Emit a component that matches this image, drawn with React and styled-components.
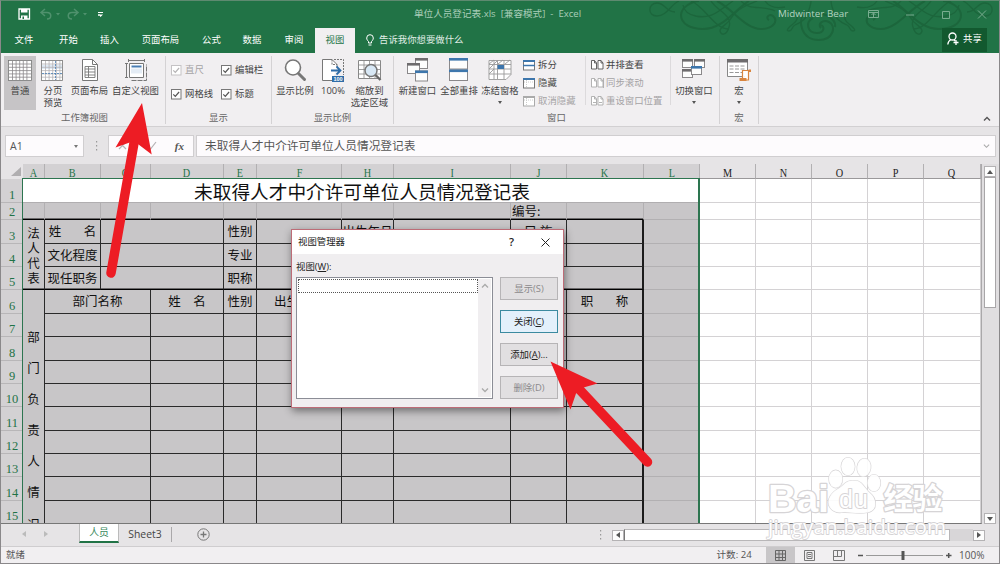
import React from "react";
import styled, { createGlobalStyle, css } from "styled-components";

const UI = `"Open Sans", "Noto Sans CJK SC", sans-serif`;
const CJK = `"Noto Sans CJK SC", sans-serif`;
const GREEN = "#217346";

const Global = createGlobalStyle`
  * { box-sizing: border-box; }
  body { margin: 0; background: #fff; overflow: hidden; }
  svg { display: block; flex: none; }
`;

const Window = styled.div`
  position: relative;
  width: 1000px;
  height: 564px;
  display: flex;
  flex-direction: column;
  border: 1px solid #8a888a;
  border-top-color: #5e8a70;
  background: #e6e4e6;
  font: 9.4px/12px ${UI};
  color: #444;
  overflow: hidden;
  white-space: pre;
`;

/* ---------- title bar and ribbon tabs ---------- */
const Header = styled.header`
  position: relative;
  height: 52px;
  flex: none;
  background: ${GREEN};
  color: #fff;
`;
const Swirls = styled.svg`
  position: absolute;
  right: 0;
  top: 0;
`;
const TitleBar = styled.div`
  position: relative;
  display: flex;
  align-items: center;
  height: 27px;
  padding: 0 6px 2px 17px;
`;
const QuickAccess = styled.div`
  display: flex;
  align-items: center;
  width: 396px;
`;
const DocTitle = styled.div`
  width: 364px;
  font-size: 9.6px;
  color: #a9cdb8;
`;
const Account = styled.div`
  width: 85px;
  font-size: 9.8px;
  color: #b4d3c0;
`;
const WinButtons = styled.div`
  display: flex;
  align-items: center;
`;
const TabRow = styled.div`
  position: relative;
  display: flex;
  height: 25px;
`;
const Tab = styled.div`
  width: ${(p) => p.$w}px;
  display: flex;
  align-items: center;
  justify-content: center;
  padding-bottom: 2px;
  ${(p) => p.$active && css`background: #f1eff1; color: ${GREEN};`}
`;
const TellMe = styled.div`
  display: flex;
  align-items: center;
  gap: 5px;
  padding: 0 0 1px 11px;
  flex: 1;
  color: #e0eee6;
`;
const Share = styled.div`
  display: flex;
  align-items: center;
  gap: 4px;
  width: 45px;
  height: 24px;
  margin-right: 12px;
  padding: 0 0 2px 5px;
  background: #12592f;
`;

/* ---------- ribbon ---------- */
const Ribbon = styled.div`
  display: flex;
  height: 74px;
  flex: none;
  padding: 3px 0 2px 3px;
  background: #f1eff1;
  border-bottom: 1px solid #d2d0d2;
`;
const Group = styled.div`
  width: ${(p) => p.$w}px;
  display: flex;
  flex-direction: column;
  border-right: 1px solid #d4d2d4;
`;
const GroupBody = styled.div`
  display: flex;
  height: 54px;
`;
const GroupLabel = styled.div`
  display: flex;
  justify-content: center;
  padding-top: 2px;
  color: #666;
`;
const BigButton = styled.div`
  width: ${(p) => p.$w}px;
  display: flex;
  flex-direction: column;
  align-items: center;
  text-align: center;
  line-height: 11.5px;
  padding-top: 2px;
  background: ${(p) => (p.$on ? "#c6c4c6" : "transparent")};
  svg { margin-bottom: 3px; }
`;
const Caret = styled.i`
  margin: ${(p) => p.$m || "4px 0 0"};
  border: 2.5px solid transparent;
  border-top: 3px solid ${(p) => p.$c || "#555"};
  border-bottom: 0;
`;
const Checks = styled.div`
  display: grid;
  grid-template-columns: 50px 50px;
  grid-template-rows: 24px 24px;
  align-items: center;
  padding: 2px 0 0 5px;
`;
const Check = styled.div`
  display: flex;
  align-items: center;
  gap: 3px;
  color: ${(p) => (p.$off ? "#a5a3a5" : "#444")};
`;
const SmallCol = styled.div`
  width: ${(p) => p.$w}px;
  display: flex;
  flex-direction: column;
  height: 49px;
  padding-left: ${(p) => p.$pl}px;
  border-right: 1px solid #dcdadc;
`;
const SmallButton = styled.div`
  display: flex;
  align-items: center;
  gap: 2px;
  height: 18px;
  flex: none;
  color: ${(p) => (p.$off ? "#a5a3a5" : "#444")};
`;
const Collapse = styled.div`
  margin-left: auto;
  align-self: flex-end;
  padding: 0 8px 2px 0;
`;

/* ---------- formula bar ---------- */
const FormulaBar = styled.div`
  display: flex;
  align-items: center;
  height: 37px;
  flex: none;
  padding: 1px 3px 0 4px;
`;
const Field = styled.div`
  height: 22px;
  width: ${(p) => p.$w || "auto"};
  flex: ${(p) => (p.$w ? "none" : 1)};
  margin-right: ${(p) => p.$mr || 0}px;
  display: flex;
  align-items: center;
  justify-content: space-between;
  padding: 0 5px 0 4px;
  background: #fdfbfd;
  border: 1px solid #d0ced0;
  color: #555;
  font-size: 10.5px;
`;
const Formula = styled.span`
  font: 11.7px/14px ${CJK};
  padding: 0 0 2px 4px;
`;
const Fx = styled.span`
  font: italic bold 11px "Liberation Serif", serif;
  padding-right: 4px;
`;
const Dots = styled.div`
  width: ${(p) => p.$w}px;
  display: flex;
  justify-content: center;
`;

/* ---------- worksheet ---------- */
const Middle = styled.div`
  display: flex;
  height: 360px;
  flex: none;
`;
const Sheet = styled.div`
  display: grid;
  width: 982px;
  height: 360px;
  overflow: hidden;
  grid-template-columns: 22px 22px 56px 50px 73px 33px 85px 52px 117px 56px 77px 56px 56px 56px 56px 56px 57px 2px;
  grid-template-rows: 15px 24px 17px 24px 23px 23px 24px 23px 24px 23px 23px 24px 23px 23px 24px 23px;
  border-bottom: 1px solid #777;
  border-right: 1px solid #aaa8aa;
`;
const at = css`
  grid-row: ${(p) => p.$r} / span ${(p) => p.$rs || 1};
  grid-column: ${(p) => p.$c} / span ${(p) => p.$cs || 1};
`;
const ColHead = styled.div`
  ${at}
  display: flex;
  justify-content: center;
  font: 12.5px/14px "Liberation Serif", serif;
  padding-top: 2px;
  height: 15px;
  color: ${(p) => (p.$sel ? "#1f7347" : "#222")};
  background: ${(p) => (p.$sel ? "#d3d1d3" : "#e6e4e6")};
  border-right: 1px solid #b2b0b2;
  border-bottom: 1px solid #9a989a;
  span { transform: scaleX(0.82); }
`;
const RowHead = styled.div`
  ${at}
  display: flex;
  justify-content: center;
  align-items: flex-end;
  font: 12.5px/13px "Liberation Serif", serif;
  color: #1f7347;
  background: #d3d1d3;
  border-bottom: 1px solid #b8b6b8;
`;
const Corner = styled.div`
  ${at}
  display: flex;
  justify-content: flex-end;
  align-items: flex-end;
  padding: 0 2px 3px 0;
`;
const Cell = styled.div`
  ${at}
  display: flex;
  align-items: center;
  justify-content: ${(p) => p.$align || "center"};
  font: 12.5px/16px ${CJK};
  color: #111;
  padding: 0 0 1px ${(p) => (p.$align ? 1 : 0)}px;
  background: ${(p) => p.$bg || "#c8c6c8"};
  border-style: solid;
  border-color: ${(p) => p.$line || "#2a2a2a"};
  border-width: 0 ${(p) => (p.$noRight ? 0 : 1)}px 1px 0;
  ${(p) => p.$thickBottom && css`border-bottom: 1px solid #000; box-shadow: inset 0 -1px #6c6a6c;`}
  ${(p) => p.$thickRight && css`border-right: 2px solid #1b1b1b;`}
`;
const SheetTitle = styled(Cell)`
  font-size: 18.67px;
  line-height: 20px;
  padding: 1px 0 0 2px;
  background: #fff;
  border-color: #b0aeb0;
`;
const VerticalCell = styled(Cell)`
  flex-direction: column;
  justify-content: flex-start;
  overflow: hidden;
  padding-top: ${(p) => p.$pt}px;
  span { line-height: ${(p) => p.$lh}px; flex: none; }
`;
const Selection = styled.div`
  grid-row: 2 / -1;
  grid-column: 2 / span 11;
  margin: -1px 0 0 -1px;
  border: 2px solid #2d7550;
  border-bottom: 0;
  border-left-width: 1px;
  border-top-width: 1px;
  z-index: 1;
`;
const VScroll = styled.div`
  flex: 1;
  display: flex;
  flex-direction: column;
  padding: 2px 3px 0 2px;
  background: #e0dee0;
`;
const ScrollBtn = styled.div`
  width: 12px;
  height: 11px;
  flex: none;
  display: flex;
  align-items: center;
  justify-content: center;
  background: #fdfdfd;
  border: 1px solid #b4b2b4;
`;
const VThumb = styled.div`
  width: 12px;
  height: 131px;
  margin-bottom: auto;
  background: #fff;
  border: 1px solid #a8a6a8;
`;
const Tri = styled.i`
  border: 3px solid transparent;
  ${(p) => p.$d === "up" && `border-bottom: 4px solid ${p.$c || "#555"}; border-top: 0;`}
  ${(p) => p.$d === "down" && `border-top: 4px solid ${p.$c || "#555"}; border-bottom: 0;`}
  ${(p) => p.$d === "left" && `border-right: 4px solid ${p.$c || "#555"}; border-left: 0;`}
  ${(p) => p.$d === "right" && `border-left: 4px solid ${p.$c || "#555"}; border-right: 0;`}
`;

/* ---------- sheet tabs and status ---------- */
const TabsBar = styled.div`
  display: flex;
  height: 22px;
  flex: none;
  padding-left: 20px;
`;
const Navs = styled.div`
  display: flex;
  align-items: flex-start;
  gap: 18px;
  width: 58px;
  padding: 7px 0 0 1px;
`;
const SheetTab = styled.div`
  width: ${(p) => p.$w}px;
  height: 19px;
  display: flex;
  align-items: center;
  justify-content: center;
  font-size: ${(p) => (p.$active ? 9.8 : 10.4)}px;
  ${(p) => p.$active && css`
    background: #fff;
    color: #3a8a5e;
    border: 1px solid #bbb;
    border-top: 0;
    border-bottom: 2px solid ${GREEN};
  `}
`;
const TabSep = styled.i`
  width: 1px;
  height: 15px;
  margin: 3px 25px 0 0;
  background: #aaa8aa;
`;
const HScroll = styled.div`
  display: flex;
  align-items: center;
  margin-left: auto;
  padding-right: 14px;
`;
const HThumb = styled.div`
  width: 326px;
  height: 12px;
  background: #fff;
  border: 1px solid #b8b6b8;
  border-left-color: #777;
`;
const HTrack = styled.div`
  width: 23px;
  height: 12px;
  background: #d8d6d8;
`;
const Status = styled.footer`
  display: flex;
  align-items: center;
  flex: 1;
  padding: 0 14px 1px 5px;
  background: #f1eff1;
  border-top: 1px solid #cfcdcf;
  color: #555;
`;
const Count = styled.div`
  margin-left: auto;
  width: 49px;
  font-size: 9.6px;
`;
const ViewBtn = styled.div`
  width: 29.5px;
  height: 16px;
  display: flex;
  align-items: center;
  justify-content: center;
  background: ${(p) => (p.$on ? "#c8c6c8" : "transparent")};
`;
const Percent = styled.div`
  width: 26px;
  margin-left: 7px;
  font-size: 10px;
`;

/* ---------- dialog ---------- */
const Dialog = styled.div`
  position: absolute;
  left: 290px;
  top: 228px;
  width: 273px;
  height: 179px;
  display: flex;
  flex-direction: column;
  background: #f0eef0;
  border: 1px solid #bd6c77;
  box-shadow: 1px 3px 8px rgba(0, 0, 0, 0.45);
  color: #222;
  z-index: 3;
`;
const DialogTitle = styled.div`
  display: flex;
  align-items: center;
  height: 24px;
  flex: none;
  padding: 0 13px 0 6px;
  background: #fff;
`;
const Help = styled.b`
  margin-left: auto;
  padding-right: 27px;
  font-size: 11px;
  font-weight: 600;
`;
const DialogBody = styled.div`
  display: flex;
  gap: 7px;
  padding: 7px 4px 0;
`;
const ListCol = styled.div`
  display: flex;
  flex-direction: column;
  gap: 4px;
`;
const List = styled.div`
  width: 197px;
  height: 122px;
  display: flex;
  background: #fff;
  border: 1px solid #8b8d96;
  padding: 1px;
`;
const ListItem = styled.div`
  flex: 1;
  height: 14px;
  border: 1px dotted #555;
`;
const ListScroll = styled.div`
  width: 13px;
  display: flex;
  flex-direction: column;
  justify-content: space-between;
  align-items: center;
  padding: 4px 0;
  background: #f0eef0;
`;
const DialogButtons = styled.div`
  display: flex;
  flex-direction: column;
  gap: 10px;
  padding-top: 16px;
`;
const DButton = styled.div`
  width: 58px;
  height: 23px;
  display: flex;
  align-items: center;
  justify-content: center;
  color: ${(p) => (p.$off ? "#8b898b" : "#222")};
  background: ${(p) => (p.$hot ? "#e3f0fb" : "#e1dfe1")};
  border: 1px solid ${(p) => (p.$hot ? "#3b8aa0" : "#b6b4b6")};
`;

const Overlay = styled.svg`
  position: absolute;
  left: -1px;
  top: -1px;
  z-index: 4;
  pointer-events: none;
`;

/* ---------- icons ---------- */
const lines = (n, f) => Array.from({ length: n }, (_, i) => f(i));

const SwirlHalf = () => (
  <g>
    <path d="M40 0c-8 3-12 15-22 15-10 0-9-13 0-13 8 0 9 9 18 9" />
    <path d="M60 0c-6 0-18 6-18 14 0 9 10 14 22 14 20 0 30-18 46-28" strokeWidth="2" />
    <path d="M44 4c2 12 22 16 36 6L94 0M52 0c14 6 24 28 37 28" />
    <path d="M72 0c6 10 22 14 18 26-2 8-8 9-9 4 0-5 8-6 12-14C98 8 108 4 118 0" />
    <path d="M78 0c16 8 28 28 44 28 12 0 18-8 12-13-4-3-8 2-4 4" strokeWidth="2" />
    <path d="M102 0c8 10 22 4 34 10M126 0c4 6 10 8 20 6" />
    <path d="M156 14c4 2 2 6-2 9s-8 7-4 7 2-4 6-6 10-4 12-10c2-5 4-10 4-14" />
  </g>
);
const GridIcon = ({ breaks }) => (
  <svg width="24" height="24" viewBox="0 0 24 24" fill="none" stroke={breaks ? "#b5b3b5" : "#8a888a"} strokeWidth=".8">
    <rect x=".5" y="2.5" width={breaks ? 21 : 23} height="20" fill="#fff" stroke="#777" />
    {breaks && <path d="M1 7h20v4H1z" fill="#dfeaf5" stroke="none" />}
    {lines(5, (i) => <path key={i} d={`M1 ${6 + i * 3.3}h${breaks ? 20 : 22}`} />)}
    {lines(5, (i) => <path key={`v${i}`} d={`M${4.5 + i * 3.6} 3v19`} />)}
    {breaks && <path d="M14.5 3v19M1 15.5h20" stroke="#4a7fb5" strokeDasharray="2 1" />}
  </svg>
);
const PageIcon = () => (
  <svg width="18" height="24" viewBox="0 0 18 24" fill="none" stroke="#777">
    <path d="M1.500 1.500h10l5 5v16h-15z" fill="#fff" />
    <path d="M11.500 1.500v5h5" />
    <path d="M4 8.500h10v11H4zM4 11h10M4 14h10M4 17h10M7.500 8.500v11" strokeWidth=".9" />
  </svg>
);
const CustomViewIcon = () => (
  <svg width="24" height="24" viewBox="0 0 24 24" fill="none" stroke="#777">
    <path d="M5.500 5.500h14v14h-14z" fill="#fff" />
    <path d="M7.500 8.500h10" stroke="#4a7fb5" strokeWidth="2" />
    <path d="M7 10.500h11v5H7z" fill="#e4ecf5" stroke="none" />
    <path d="M4.500 2.500h16M4.500 1v3M20.500 1v3M2.500 5.500v14M1 5.500h3M1 19.500h3" />
    <path d="M7.500 22.500h15V6.500" strokeDasharray="5 1" />
  </svg>
);
const LensIcon = () => (
  <svg width="24" height="24" viewBox="0 0 24 24" fill="none">
    <circle cx="10" cy="9.500" r="7.500" fill="#fff" stroke="#777" strokeWidth="1.600" />
    <path d="M15.500 15.500l6 6" stroke="#777" strokeWidth="3" strokeLinecap="round" />
  </svg>
);
const HundredIcon = () => (
  <svg width="22" height="24" viewBox="0 0 22 24" fill="none">
    <path d="M10 22.500H.5v-21H10l5 5V9" fill="#fff" stroke="#777" />
    <path d="M10 1.500v5h5M12 1.500h9.500V17" stroke="#777" strokeDasharray="2 1" />
    <path d="M9 12.500h9M14.500 8.500l4 4-4 4" stroke="#2f6da8" strokeWidth="1.800" />
    <path d="M10 18h12v6H10z" fill="#2f6da8" />
    <text x="11.500" y="23" fontSize="5.500" fontWeight="700" fill="#fff" fontFamily="Liberation Sans">100</text>
  </svg>
);
const ZoomSelIcon = () => (
  <svg width="24" height="24" viewBox="0 0 24 24" fill="none" stroke="#888">
    <path d="M.5 2.500h22v18H.5z" fill="#fff" />
    <path d="M1 7h21M1 11.500h21M1 16h21M6 3v17M11.500 3v17M17 3v17" strokeWidth=".8" />
    <circle cx="13" cy="12.500" r="6" fill="#d8e8f5" stroke="#777" strokeWidth="1.500" />
    <path d="M17.500 17l5 5" stroke="#666" strokeWidth="2.400" />
  </svg>
);
const Pane = ({ x, y, w, h, c = "#6e6c6e" }) => (
  <g>
    <rect x={x + 0.5} y={y + 0.5} width={w - 1} height={h - 1} fill="#fdfdfd" stroke="#8a888a" />
    <rect x={x} y={y} width={w} height="2.600" fill={c} />
  </g>
);
const NewWinIcon = () => (
  <svg width="22" height="24" viewBox="0 0 22 24">
    <Pane x={8} y={0} w={13} h={11} /><Pane x={0} y={5} w={13} h={11} /><Pane x={8} y={12.5} w={13} h={11} c="#3d76ac" />
  </svg>
);
const ArrangeIcon = () => (
  <svg width="20" height="24" viewBox="0 0 20 24">
    <Pane x={0} y={0} w={19} h={11.5} c="#3d76ac" /><Pane x={0} y={11.5} w={19} h={11.5} c="#3d76ac" />
  </svg>
);
const FreezeIcon = () => (
  <svg width="24" height="24" viewBox="0 0 24 24" fill="none" stroke="#999" strokeWidth=".9">
    <path d="M1 2.500h22v14l-5 5H1z" fill="#fff" />
    <path d="M1 6.500h22M1 11h22M1 16h22M6 2v19M9.500 2v19M16 2v19M1 6l5-4M1 11l8-8M1 16l5-5M10 6l5-4M17 6l5-4" />
    <path d="M9.500 7h6.500v4H9.500z" fill="#3d76ac" stroke="none" />
  </svg>
);
const SwitchIcon = () => (
  <svg width="24" height="24" viewBox="0 0 24 24">
    <Pane x={0} y={1} w={11} h={9} /><Pane x={12} y={1} w={11} h={9} /><Pane x={0} y={11} w={11} h={9} /><Pane x={9} y={8} w={11} h={9} c="#3d76ac" />
  </svg>
);
const MacroIcon = () => (
  <svg width="26" height="24" viewBox="0 0 26 24" fill="none">
    <path d="M1.500 1.500h20v17h-20z" fill="#fff" stroke="#888" />
    <path d="M1 1h21v3.500H1z" fill="#6e6c6e" />
    <path d="M3.500 8h16M3.500 11h16M3.500 14.500h16" stroke="#999" strokeDasharray="4 1.500" />
    <path d="M16.500 21v-8.500h7.500M22.500 13v9h-6" stroke="#d9853f" strokeWidth="1.200" fill="#fff" />
    <path d="M13.500 20h7v3h-7zM22.500 11.500h2.500v2.500h-2.500z" fill="#d9853f" />
  </svg>
);
const MiniPane = ({ kind }) => (
  <svg width="13" height="12" viewBox="0 0 13 12" fill="none">
    <rect x=".5" y="1.500" width="11" height="9.500" fill="#fff" stroke={kind === 2 ? "#aaa" : "#777"} />
    <path d="M0 2h12" stroke={kind === 2 ? "#aaa" : "#3d76ac"} strokeWidth="2" />
    {kind === 0 && <path d="M0 6.500h12" stroke="#3d76ac" strokeWidth="1.500" />}
    {kind > 0 && <path d="M1 5h10M3.500 3v8" stroke="#ccc" strokeDasharray="1 1" />}
  </svg>
);
const MiniPair = ({ off, kind }) => (
  <svg width="13" height="12" viewBox="0 0 13 12" fill="none" stroke={off ? "#aaa" : "#555"} strokeWidth=".9">
    <path d="M.5 1.500v8.500h5V4L3.500 1.500zM3.500 1.500V4h2M7 1.500v8.500h5V4l-2-2.500zM10 1.500V4h2" fill="#fff" />
    {kind === 1 && <path d="M12.500 1v10" />}
    {kind === 2 && <path d="M2 7.500h3M8 7.500h3" />}
  </svg>
);
const Box = ({ off }) => (
  <svg width="11" height="11" viewBox="0 0 11 11" fill="none" stroke={off ? "#b5b3b5" : "#555"}>
    <rect x=".5" y=".5" width="9.500" height="9.500" fill="#fff" stroke={off ? "#c5c3c5" : "#777"} />
    <path d="M2.300 5.400l2 2 3.800-4.400" strokeWidth="1.200" />
  </svg>
);
const DotsIcon = () => (
  <svg width="3" height="10" viewBox="0 0 3 10" fill="#999">
    <path d="M1 0h1.200v1.500H1zM1 4h1.200v1.500H1zM1 8h1.200v1.500H1z" />
  </svg>
);
const Chevron = ({ up, c = "#888", w = 8, s = 1 }) => (
  <svg width={w} height="6" viewBox="0 0 8 6" fill="none" stroke={c} strokeWidth={s}>
    <path d={up ? "M1 4.500l3-3 3 3" : "M1 1.500l3 3 3-3"} />
  </svg>
);

/* ---------- worksheet data; column index 2 is A, row index 2 is row 1 ---------- */
const LETTERS = ["A", "B", "C", "D", "E", "F", "H", "I", "J", "K", "L", "M", "N", "O", "P", "Q"];
const SOFT = "#b2b0b2";
const GAP = " ".repeat(8);

const formCells = [
  { r: 4, c: 3, t: `姓${GAP}名` }, { r: 4, c: 4, cs: 2 }, { r: 4, c: 6, t: "性别" }, { r: 4, c: 7 },
  { r: 4, c: 8, t: "出生年月" }, { r: 4, c: 9 }, { r: 4, c: 10, t: "民 族" }, { r: 4, c: 11, right: 1 },
  { r: 5, c: 3, t: "文化程度" }, { r: 5, c: 4, cs: 2 }, { r: 5, c: 6, t: "专业" }, { r: 5, c: 7 },
  { r: 5, c: 8 }, { r: 5, c: 9 }, { r: 5, c: 10 }, { r: 5, c: 11, right: 1 },
  { r: 6, c: 3, t: "现任职务", bottom: 1 }, { r: 6, c: 4, cs: 2, bottom: 1 }, { r: 6, c: 6, t: "职称", bottom: 1 },
  { r: 6, c: 7, cs: 5, right: 1, bottom: 1 },
  { r: 7, c: 3, cs: 2, t: "部门名称" }, { r: 7, c: 5, t: "姓　名" }, { r: 7, c: 6, t: "性别" },
  { r: 7, c: 7, t: "出生年月" }, { r: 7, c: 8 }, { r: 7, c: 9 }, { r: 7, c: 10 }, { r: 7, c: 11, t: `职${GAP}称`, right: 1 },
];
for (let r = 8; r <= 16; r++) {
  formCells.push({ r, c: 3, cs: 2 });
  for (let c = 5; c <= 11; c++) formCells.push({ r, c, right: c === 11 });
}

function Worksheet() {
  return (
    <Sheet>
      <Corner $r={1} $c={1}>
        <svg width="10" height="9"><path d="M10 0v9H0z" fill="#b0aeb0" /></svg>
      </Corner>
      {LETTERS.map((l, i) => (
        <ColHead key={l} $r={1} $c={i + 2} $sel={i < 11}><span>{l}</span></ColHead>
      ))}
      {lines(15, (i) => <RowHead key={i} $r={i + 2} $c={1}>{i + 1}</RowHead>)}
      <SheetTitle $r={2} $c={2} $cs={11}>未取得人才中介许可单位人员情况登记表</SheetTitle>
      {lines(11, (i) => (
        <Cell key={i} $r={3} $c={i + 2} $line={SOFT} $thickBottom={i < 10} $align={i === 8 ? "flex-start" : undefined}>
          {i === 8 ? "编号:" : ""}
        </Cell>
      ))}
      <VerticalCell $r={4} $rs={3} $c={2} $pt={5} $lh={15} $thickBottom>
        {[..."法人代表"].map((ch) => <span key={ch}>{ch}</span>)}
      </VerticalCell>
      <VerticalCell $r={7} $rs={10} $c={2} $pt={31} $lh={31.1}>
        {[..."部门负责人情况"].map((ch) => <span key={ch}>{ch}</span>)}
      </VerticalCell>
      {formCells.map(({ r, c, cs, t, right, bottom }) => (
        <Cell key={`${r}-${c}`} $r={r} $c={c} $cs={cs} $thickRight={right} $thickBottom={bottom}>{t}</Cell>
      ))}
      {lines(13, (i) => <Cell key={`L${i}`} $r={i + 4} $c={12} $line={SOFT} />)}
      {lines(15, (i) => lines(6, (j) => (
        <Cell key={`${i}/${j}`} $r={i + 2} $c={j + 13} $bg="#fff" $line="#d4d2d4" $noRight={j === 5} />
      )))}
      <Selection />
    </Sheet>
  );
}

const TABS = [["文件", 46], ["开始", 43], ["插入", 39], ["页面布局", 63], ["公式", 39], ["数据", 42], ["审阅", 42]];

export default function App() {
  return (
    <Window>
      <Global />
      <Header>
        <Swirls width="360" height="52" viewBox="0 0 360 52" fill="none" stroke="#1c663c" strokeWidth="1.300">
          <SwirlHalf />
          <g transform="translate(364 0) scale(-1 1)"><SwirlHalf /></g>
          <path d="M166 10c-8 10-4 29 14 29 14 0 18-14 10-18-6-3-12 2-8 6M174 17c-8 4-6 15 4 15 8 0 8-8 3-8M170 16c10-8 28 0 26 10" strokeWidth="2" />
        </Swirls>
        <TitleBar>
          <QuickAccess>
            <svg width="82" height="16" viewBox="0 0 82 16" fill="none">
              <path d="M1 3h10.500v10H1z" stroke="#fff" strokeWidth="1.300" />
              <path d="M3 3h6.500v3.500H3zM3 9.500h6.500V13H3z" fill="#fff" />
              <path d="M4.500 10.500h1.500V13H4.500z" fill={GREEN} />
              <g stroke="#4f916d" strokeWidth="1.500">
                <path d="M27 3l-4 3.500 4 3.500M23.500 6.500H29c5 0 5 6.500 0 6.500" />
                <path d="M56 3l4 3.500-4 3.500M59.500 6.500H54c-5 0-5 6.500 0 6.500" />
              </g>
              <path d="M38 7h4l-2 2.500zM65 7h4l-2 2.500z" fill="#4f916d" />
              <path d="M80 6.500h4M80 9h2z" stroke="#fff" />
            </svg>
            <svg width="6" height="10" viewBox="0 0 6 10"><path d="M-2 3h5v1h-5zM-2 5.500h5L.5 8z" fill="#fff" /></svg>
          </QuickAccess>
          <DocTitle>单位人员登记表.xls  [兼容模式]  -  Excel</DocTitle>
          <Account>Midwinter Bear</Account>
          <WinButtons>
            <svg width="130" height="12" viewBox="0 0 130 12" fill="none" stroke="#79ad90">
              <path d="M5.500 2.500h10v7h-10zM5.500 4.500h10M10.500 9V5.500M8.500 7l2-2 2 2M43 7h8M79.500 3.500h7v7h-7zM115 2.500l8 8M123 2.500l-8 8" />
            </svg>
          </WinButtons>
        </TitleBar>
        <TabRow>
          {TABS.map(([t, w]) => <Tab key={t} $w={w}>{t}</Tab>)}
          <Tab $w={40} $active>视图</Tab>
          <TellMe>
            <svg width="8" height="12" viewBox="0 0 8 12" fill="none" stroke="#fff">
              <path d="M2.500 9V7.500C1.500 6.500.7 5.500.7 4a3.300 3.300 0 016.600 0c0 1.500-.8 2.500-1.800 3.500V9zM2.500 11h3" />
            </svg>
            告诉我你想要做什么
          </TellMe>
          <Share>
            <svg width="12" height="14" viewBox="0 0 12 14" fill="none" stroke="#fff" strokeWidth="1.300">
              <circle cx="5.500" cy="4.500" r="3.500" /><path d="M4 7.500C2 8.500 1 10 .8 12.500M7 8l1 1M9 8v5M6.500 10.500h5" />
            </svg>
            共享
          </Share>
        </TabRow>
      </Header>

      <Ribbon>
        <Group $w={162}>
          <GroupBody>
            <BigButton $w={32} $on><GridIcon />普通</BigButton>
            <BigButton $w={34}><GridIcon breaks />{"分页\n预览"}</BigButton>
            <BigButton $w={39}><PageIcon />页面布局</BigButton>
            <BigButton $w={53}><CustomViewIcon />自定义视图</BigButton>
          </GroupBody>
          <GroupLabel>工作簿视图</GroupLabel>
        </Group>
        <Group $w={106}>
          <GroupBody>
            <Checks>
              <Check $off><Box off />直尺</Check>
              <Check><Box />编辑栏</Check>
              <Check><Box />网格线</Check>
              <Check><Box />标题</Check>
            </Checks>
          </GroupBody>
          <GroupLabel>显示</GroupLabel>
        </Group>
        <Group $w={122}>
          <GroupBody>
            <BigButton $w={46}><LensIcon />显示比例</BigButton>
            <BigButton $w={30}><HundredIcon />100%</BigButton>
            <BigButton $w={43}><ZoomSelIcon />{"缩放到\n选定区域"}</BigButton>
          </GroupBody>
          <GroupLabel>显示比例</GroupLabel>
        </Group>
        <Group $w={326}>
          <GroupBody>
            <BigButton $w={47}><NewWinIcon />新建窗口</BigButton>
            <BigButton $w={36}><ArrangeIcon />全部重排</BigButton>
            <BigButton $w={46}><FreezeIcon />冻结窗格<Caret /></BigButton>
            <SmallCol $w={63} $pl={0}>
              <SmallButton><MiniPane kind={0} />拆分</SmallButton>
              <SmallButton><MiniPane kind={1} />隐藏</SmallButton>
              <SmallButton $off><MiniPane kind={2} />取消隐藏</SmallButton>
            </SmallCol>
            <SmallCol $w={85} $pl={5}>
              <SmallButton><MiniPair />并排查看</SmallButton>
              <SmallButton $off><MiniPair off kind={1} />同步滚动</SmallButton>
              <SmallButton $off><MiniPair off kind={2} />重设窗口位置</SmallButton>
            </SmallCol>
            <BigButton $w={46}><SwitchIcon />切换窗口<Caret /></BigButton>
          </GroupBody>
          <GroupLabel>窗口</GroupLabel>
        </Group>
        <Group $w={39}>
          <GroupBody>
            <BigButton $w={38}><MacroIcon />宏<Caret /></BigButton>
          </GroupBody>
          <GroupLabel>宏</GroupLabel>
        </Group>
        <Collapse><Chevron up c="#555" s={1.4} /></Collapse>
      </Ribbon>

      <FormulaBar>
        <Field $w="79px">A1<Caret $m="0" $c="#777" /></Field>
        <Dots $w={24}><DotsIcon /></Dots>
        <Field $w="86px" $mr={2}>
          <svg width="46" height="10" viewBox="0 0 46 10" fill="none" stroke="#b5b3b5" strokeWidth="1.200">
            <path d="M6 1l7 7M13 1L6 8M35 5l2.500 3L43 1" />
          </svg>
          <Fx>fx</Fx>
        </Field>
        <Field><Formula>未取得人才中介许可单位人员情况登记表</Formula><Chevron c="#aaa" w={7} s={1.3} /></Field>
      </FormulaBar>

      <Middle>
        <Worksheet />
        <VScroll>
          <ScrollBtn><Tri $d="up" /></ScrollBtn>
          <VThumb />
          <ScrollBtn><Tri $d="down" /></ScrollBtn>
        </VScroll>
      </Middle>

      <TabsBar>
        <Navs><Tri $d="left" $c="#bbb" /><Tri $d="right" $c="#bbb" /></Navs>
        <SheetTab $w={40} $active>人员</SheetTab>
        <SheetTab $w={52}>Sheet3</SheetTab>
        <TabSep />
        <svg width="13" height="21" viewBox="0 0 13 21" fill="none" stroke="#777">
          <circle cx="6.500" cy="10.500" r="5.700" /><path d="M3.500 10.500h6M6.500 7.500v6" strokeWidth="1.300" />
        </svg>
        <HScroll>
          <Dots $w={24}><DotsIcon /></Dots>
          <ScrollBtn><Tri $d="left" /></ScrollBtn>
          <HThumb />
          <HTrack />
          <ScrollBtn><Tri $d="right" /></ScrollBtn>
        </HScroll>
      </TabsBar>

      <Status>
        就绪
        <Count>计数: 24</Count>
        <ViewBtn $on>
          <svg width="11" height="11" viewBox="0 0 11 11" fill="none" stroke="#666"><path d="M.5.5h10v10H.5zM.5 4h10M.5 7.500h10M4 .5v10M7.500.5v10" /></svg>
        </ViewBtn>
        <ViewBtn>
          <svg width="11" height="11" viewBox="0 0 11 11" fill="none" stroke="#777"><path d="M.5.5h10v10H.5zM3 2.500h5v6H3zM4 4.500h3M4 6.500h3" /></svg>
        </ViewBtn>
        <ViewBtn>
          <svg width="12" height="11" viewBox="0 0 12 11" fill="none" stroke="#777"><path d="M.5 10.500V.5h11v10zM4.500.5v6M1 6.500h7.500V1" /></svg>
        </ViewBtn>
        <svg width="98" height="12" viewBox="0 0 98 12" fill="none" stroke="#555">
          <path d="M4 6.500h5M92 6.500h5.500M94.700 4v5" strokeWidth="1.500" />
          <path d="M12 6.500h77" stroke="#999" /><path d="M49 2v9" strokeWidth="3" />
        </svg>
        <Percent>100%</Percent>
      </Status>

      <Dialog>
        <DialogTitle>
          视图管理器
          <Help>?</Help>
          <svg width="9" height="9" viewBox="0 0 9 9" fill="none" stroke="#222"><path d="M.5.5l8 8M8.500.5l-8 8" /></svg>
        </DialogTitle>
        <DialogBody>
          <ListCol>
            <span>视图(<u>W</u>):</span>
            <List>
              <ListItem />
              <ListScroll><Chevron up c="#aaa" s={1.3} /><Chevron c="#aaa" s={1.3} /></ListScroll>
            </List>
          </ListCol>
          <DialogButtons>
            <DButton $off>显示(S)</DButton>
            <DButton $hot><span>关闭(<u>C</u>)</span></DButton>
            <DButton><span>添加(<u>A</u>)...</span></DButton>
            <DButton $off>删除(D)</DButton>
          </DialogButtons>
        </DialogBody>
      </Dialog>

      <Overlay width="1000" height="564" viewBox="0 0 1000 564">
        <g fill="#fff" stroke="#d6d4d6" strokeLinejoin="round" strokeWidth="2.600" paintOrder="stroke" fontFamily="Liberation Sans, Noto Sans CJK SC, sans-serif" fontWeight="700">
          <text x="768" y="511.500" fontSize="39.500" textLength="61">Bai</text>
          <text x="883.500" y="508.500" fontSize="30" textLength="59">经验</text>
          <text x="768" y="534" fontSize="20.500" textLength="178" fontFamily="Open Sans, sans-serif" fontWeight="400" strokeWidth="1.800">jingyan.baidu.com</text>
          <g strokeWidth="1.200" fillOpacity=".9">
            <ellipse cx="835.700" cy="479" rx="6.800" ry="8.800" />
            <ellipse cx="848" cy="466.500" rx="6.800" ry="9" />
            <ellipse cx="864" cy="467.500" rx="6.800" ry="9" transform="rotate(8 864 467)" />
            <ellipse cx="874" cy="483" rx="6.500" ry="8.500" />
            <path d="M854.500 480.500c8 0 10 8 16 13s8 17-3 19-17-1-26 0-16-7-12-15 9-8 13-12 6-5 12-5z" />
          </g>
          <text x="839" y="508" fontSize="25" textLength="29" fontWeight="400" strokeWidth="2">du</text>
        </g>
        <g fill="#ed1c24" stroke="#ed1c24" strokeLinecap="round">
          <path d="M134 143L111 273" strokeWidth="9.500" />
          <path d="M142 103l-26.500 44.500L134 141l17.700 13.500z" stroke="none" />
          <path d="M579 389l68.500 73" strokeWidth="9.500" />
          <path d="M550.500 361.500l47 22-14 4-7.500 6-5.500 16z" stroke="none" />
        </g>
      </Overlay>
    </Window>
  );
}
